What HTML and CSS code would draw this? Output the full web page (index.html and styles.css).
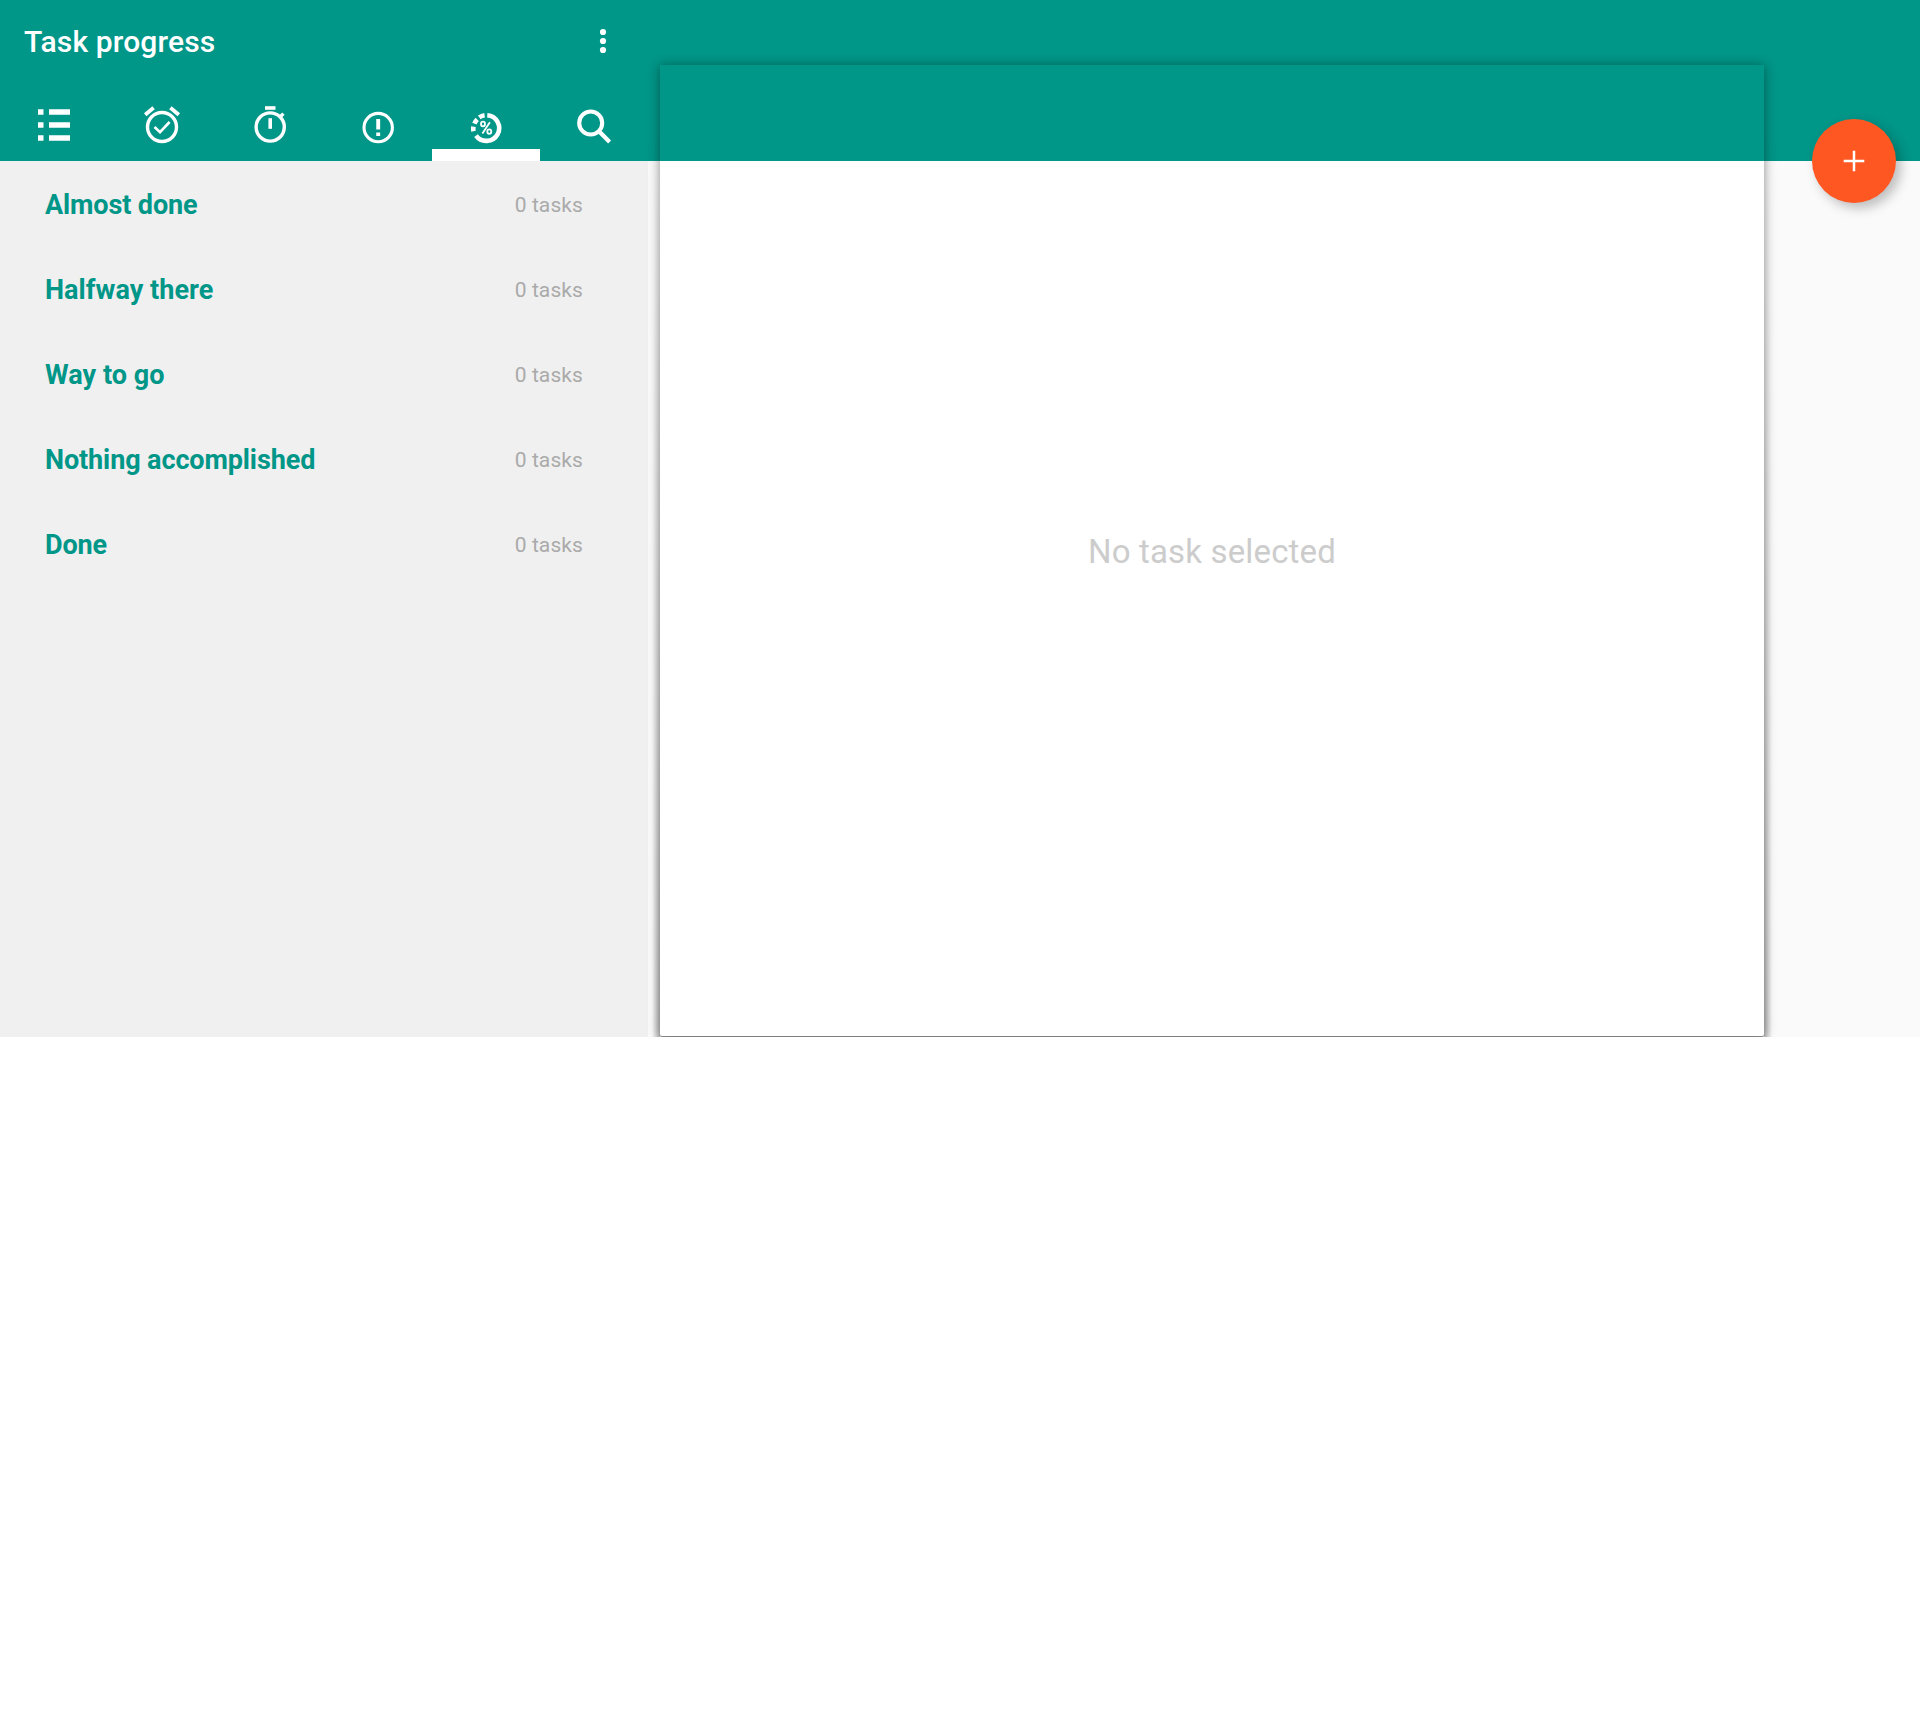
FILE: index.html
```html
<!DOCTYPE html>
<html lang="en">
<head>
<meta charset="utf-8">
<title>Task progress</title>
<link rel="stylesheet" href="styles.css">
</head>
<body>
<div class="app">
  <section class="sidebar">
    <header class="header">
      <div class="titlebar">
        <h1 class="title">Task progress</h1>
        <svg class="more" width="12" height="30" viewBox="0 0 12 30"><circle cx="6" cy="6" r="3.1"/><circle cx="6" cy="15" r="3.1"/><circle cx="6" cy="24" r="3.1"/></svg>
      </div>
      <nav class="tabs">
        <a class="tab"><svg viewBox="0 0 108 72"><path d="M38 20.3h5.5v5.5H38zM49 20.3h21v5.5H49zM38 33.3h5.5v5.5H38zM49 33.3h21v5.5H49zM38 46.3h5.5v5.5H38zM49 46.3h21v5.5H49z"/></svg></a>
        <a class="tab"><svg viewBox="0 0 108 72"><g class="line"><circle cx="54" cy="38" r="14.5" stroke-width="3.4"/><path d="M46.5 38l5.5 5.2 9.6-10.2" stroke-width="2.6"/><path d="M37.2 25.8l8.4-7M70.8 25.8l-8.4-7" stroke-width="3.8"/></g></svg></a>
        <a class="tab"><svg viewBox="0 0 108 72"><g class="line"><circle cx="54.2" cy="38" r="14.1" stroke-width="3.4"/><path d="M49 19h10.5" stroke-width="3.6"/><path d="M54.2 29.2v10.6" stroke-width="3.6"/><path d="M63.8 28.2l3.6-3.6" stroke-width="3.4"/></g></svg></a>
        <a class="tab"><svg viewBox="0 0 108 72"><g class="line"><circle cx="54.2" cy="38.6" r="14.2" stroke-width="3.1"/><path d="M54.2 30v10.4M54.2 43.6v3.4" stroke-width="3.9"/></g></svg></a>
        <a class="tab tab-active"><svg viewBox="0 0 108 72"><g class="line"><path d="M55.3 26.3a12.8 12.8 0 1 1-11.3 20.3" stroke-width="4.6"/><path d="M41.5 42.2a12.8 12.8 0 0 1-.1-4.6M42.4 34.6a12.8 12.8 0 0 1 2.8-4.3M47.3 28.4a12.8 12.8 0 0 1 5.3-2.1" stroke-width="4.6"/><ellipse cx="51" cy="35" rx="2" ry="2.3" stroke-width="1.8"/><ellipse cx="57.3" cy="42.6" rx="2" ry="2.3" stroke-width="1.8"/><path d="M57.9 33.2L50.4 44.6" stroke-width="1.8"/></g></svg></a>
        <a class="tab"><svg viewBox="0 0 108 72"><g class="line"><circle cx="50.7" cy="34" r="11.5" stroke-width="4.1"/><path d="M59 42.3l10.6 10.6" stroke-width="4.2"/></g></svg></a>
      </nav>
    </header>
    <ul class="list">
      <li class="row"><span class="name">Almost done</span><span class="count">0 tasks</span></li>
      <li class="row"><span class="name name-wide">Halfway there</span><span class="count">0 tasks</span></li>
      <li class="row"><span class="name name-wide">Way to go</span><span class="count">0 tasks</span></li>
      <li class="row"><span class="name">Nothing accomplished</span><span class="count">0 tasks</span></li>
      <li class="row"><span class="name">Done</span><span class="count">0 tasks</span></li>
    </ul>
  </section>
  <main class="detail">
    <div class="detail-bar"></div>
    <p class="empty">No task selected</p>
  </main>
  <button class="fab" aria-label="Add task"><svg width="22" height="22" viewBox="0 0 22 22"><path d="M11 .7v20.6M.7 11h20.6"/></svg></button>
</div>
</body>
</html>
```
FILE: styles.css
```css
* {
  box-sizing: border-box;
}

body {
  margin: 0;
  background: #fff;
  font-family: Roboto, "Liberation Sans", sans-serif;
}

.app {
  position: relative;
  display: grid;
  grid-template-columns: 648px 1104px;
  column-gap: 12px;
  height: 1037px;
  overflow: hidden;
  background: linear-gradient(#009688 161px, #fafafa 161px);
}

.sidebar {
  display: flex;
  flex-direction: column;
}

.header {
  height: 161px;
}

.titlebar {
  display: flex;
  align-items: center;
  justify-content: space-between;
  height: 89px;
  padding: 0 39px 7px 24px;
}

.title {
  margin: 0;
  padding-top: 2px;
  color: #fff;
  font-size: 30px;
  font-weight: 500;
  line-height: 36px;
  letter-spacing: .15px;
}

.more {
  fill: #fff;
}

.tabs {
  display: grid;
  grid-template-columns: repeat(6, 108px);
}

.tab {
  height: 72px;
  fill: #fff;
}

.tab svg {
  display: block;
  width: 108px;
  height: 72px;
}

.tab-active {
  background: linear-gradient(#fff, #fff) bottom / 100% 12px no-repeat;
}

.line {
  fill: none;
  stroke: #fff;
}

.list {
  flex: 1;
  margin: 0;
  padding: 1px 0 0;
  background: #f0f0f0;
  list-style: none;
}

.row {
  display: flex;
  align-items: center;
  justify-content: space-between;
  height: 85px;
  padding: 0 65px 0 45px;
}

.name {
  color: #009688;
  font-size: 27px;
  font-weight: 700;
  letter-spacing: -.11px;
}

.name-wide {
  letter-spacing: .05px;
}

.count {
  color: #aaa;
  font-size: 21px;
  letter-spacing: .1px;
}

.detail {
  position: relative;
  display: flex;
  flex-direction: column;
  height: 971px;
  margin-top: 65px;
  border-radius: 2px;
  background: #fff;
  box-shadow: 0 1px 12px rgba(0, 0, 0, .42), 0 1px 0 rgba(0, 0, 0, .35);
}

/* Side shadows that deepen toward the bottom of the card */
.detail::before,
.detail::after {
  content: "";
  position: absolute;
  top: 60px;
  bottom: -1px;
  width: 8px;
  -webkit-mask-image: linear-gradient(transparent, #000);
  mask-image: linear-gradient(transparent, #000);
}

.detail::before {
  right: 100%;
  background: linear-gradient(to left, rgba(0, 0, 0, .25), transparent);
}

.detail::after {
  left: 100%;
  background: linear-gradient(to right, rgba(0, 0, 0, .25), transparent);
}

.detail-bar {
  height: 96px;
  background: #009688;
}

.empty {
  margin: 371px 0 0;
  color: #ccc;
  font-size: 33px;
  line-height: 40px;
  letter-spacing: .15px;
  text-align: center;
}

.fab {
  position: absolute;
  top: 119px;
  right: 24px;
  display: flex;
  align-items: center;
  justify-content: center;
  width: 84px;
  height: 84px;
  padding: 0;
  border: 0;
  border-radius: 50%;
  background: #ff5722;
  box-shadow: 5px 5px 12px rgba(0, 0, 0, .25);
}

.fab path {
  fill: none;
  stroke: #fff;
  stroke-width: 2.5;
}
```
